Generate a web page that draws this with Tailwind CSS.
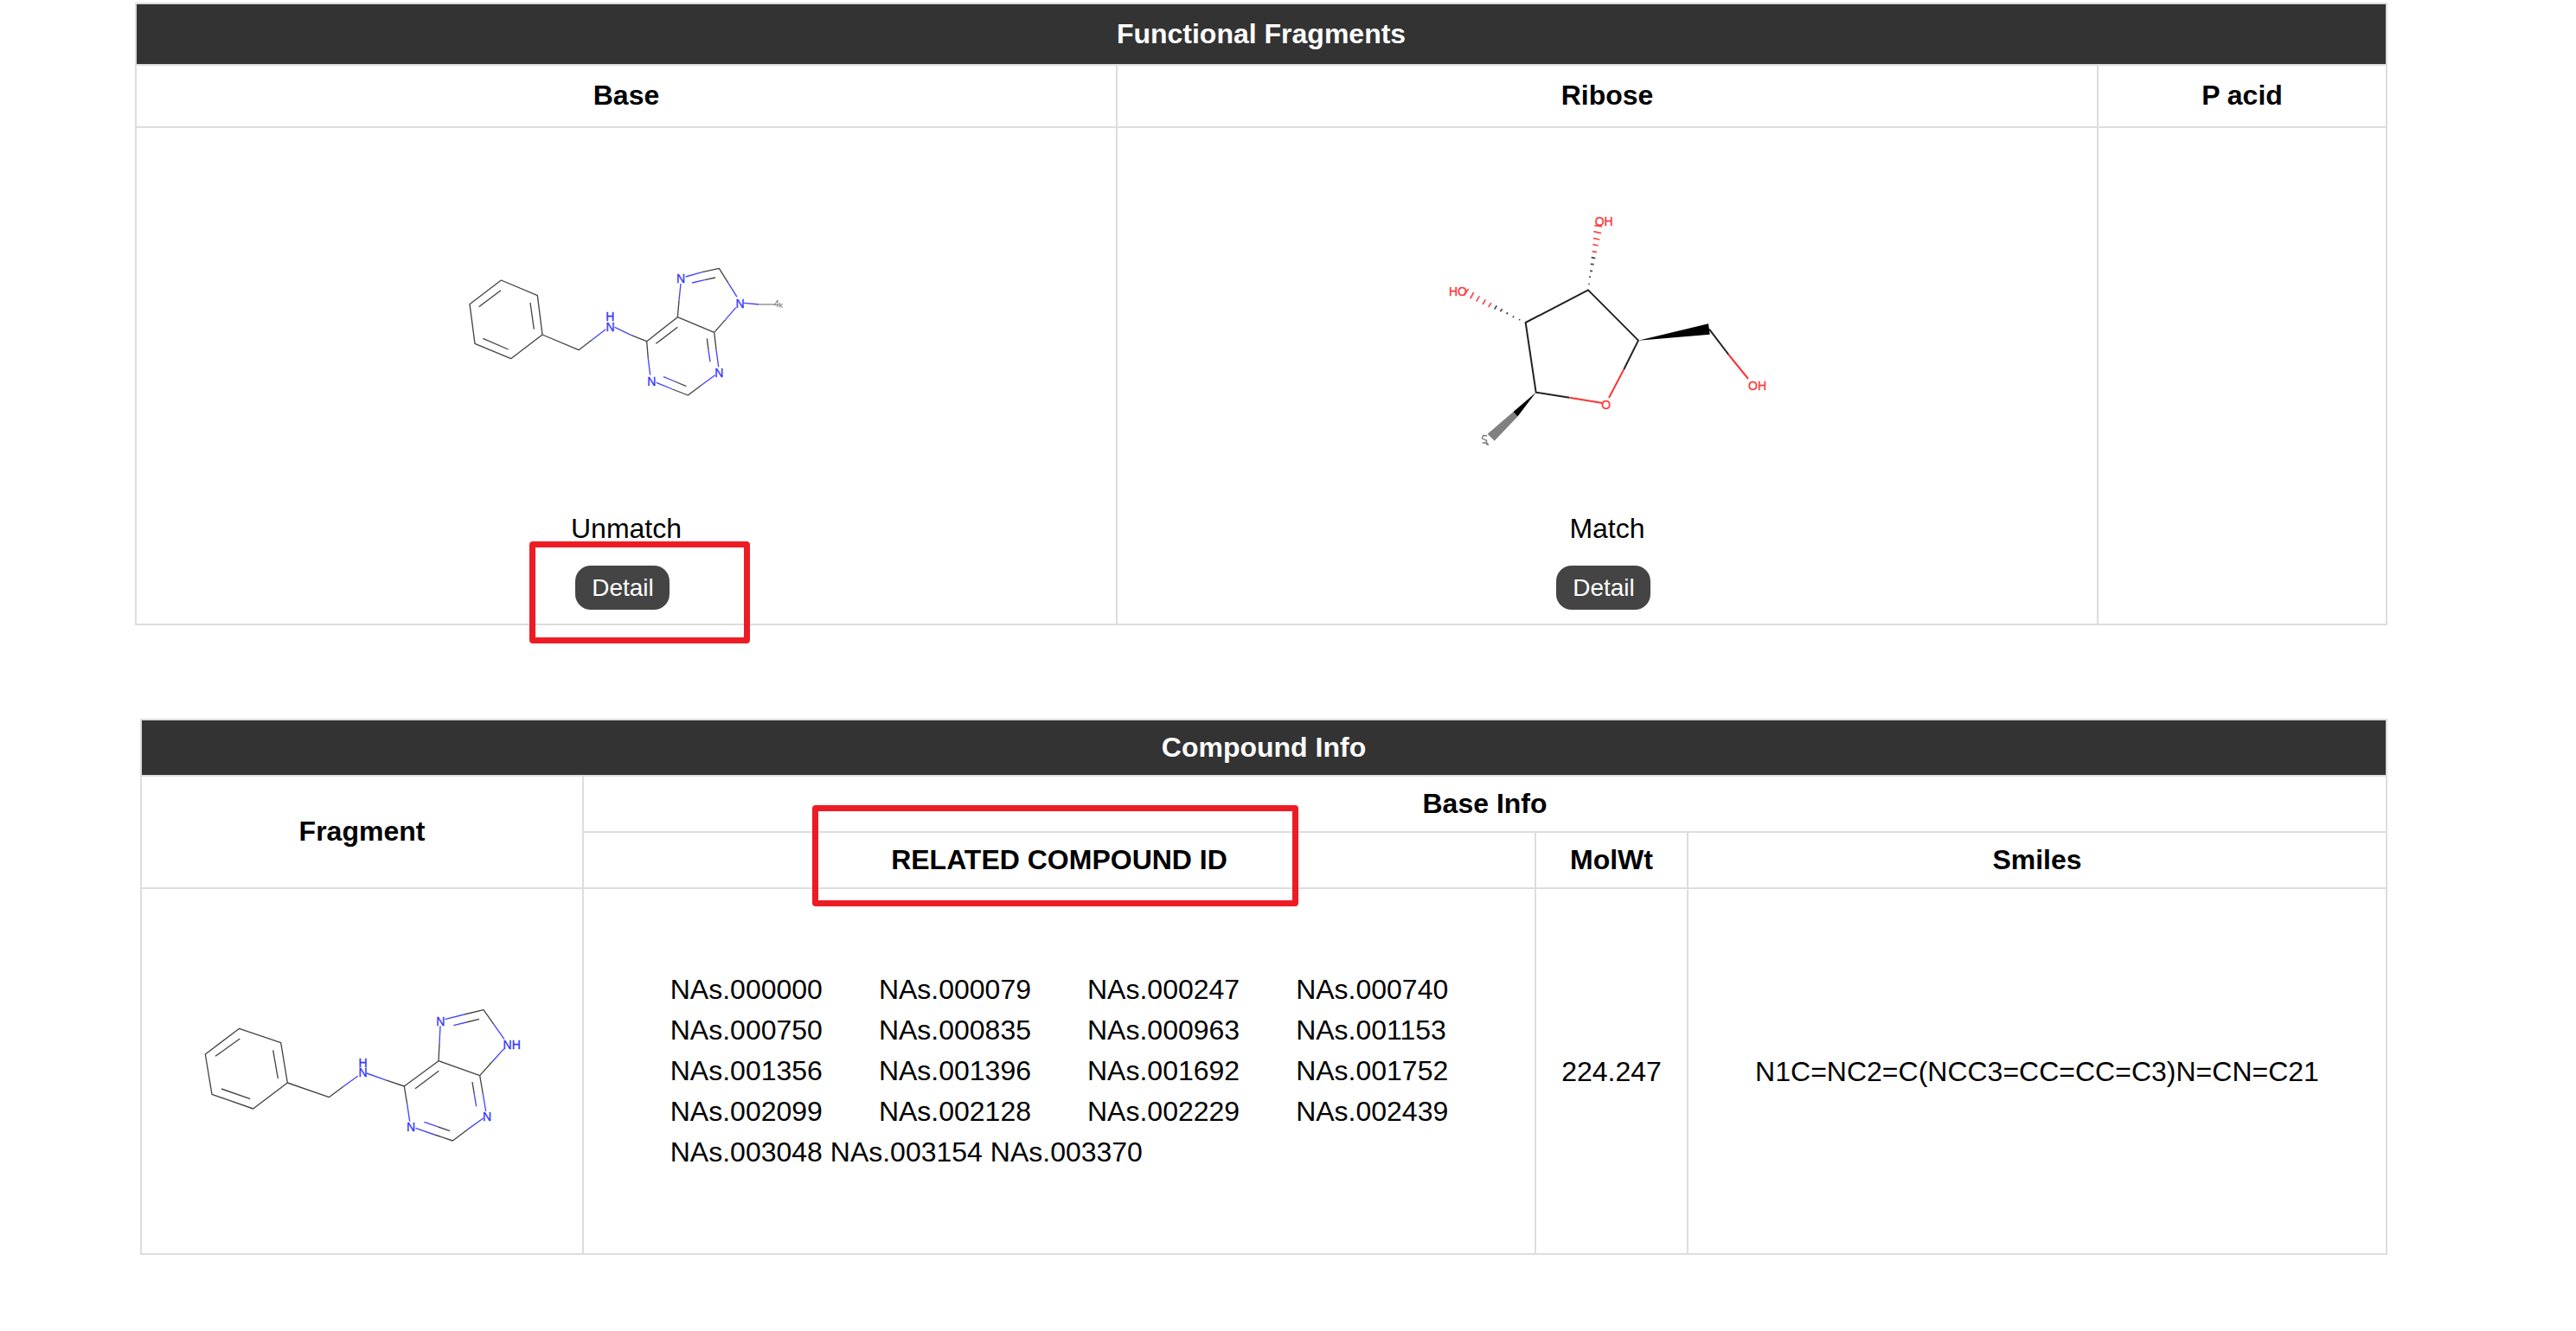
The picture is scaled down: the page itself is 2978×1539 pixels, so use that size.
<!DOCTYPE html>
<html lang="en">
<head>
    <meta charset="UTF-8">
    <meta name="viewport" content="width=device-width, initial-scale=1.0">
    <title>Functional Fragments</title>
    <script src="https://cdn.jsdelivr.net/npm/@tailwindcss/browser@4"></script>
</head>
<body class="bg-white font-['Liberation_Sans',Arial,sans-serif] text-[32px] leading-[48px] text-black">
    <main class="pt-[3px] pr-[218px] pb-20 pl-[156px]">

        <!-- Functional fragments -->
        <table class="w-full table-fixed border-collapse text-center">
            <colgroup>
                <col>
                <col>
                <col class="w-[334px]">
            </colgroup>
            <thead>
                <tr class="h-[71px] bg-[#333333] text-white">
                    <th colspan="3" class="border-2 border-[#dddddd] pb-0.5">Functional Fragments</th>
                </tr>
                <tr class="h-[72px]">
                    <th class="border-2 border-[#dddddd] pb-0.5">Base</th>
                    <th class="border-2 border-[#dddddd] pb-0.5">Ribose</th>
                    <th class="border-2 border-[#dddddd] pb-0.5">P acid</th>
                </tr>
            </thead>
            <tbody>
                <tr>
                    <td class="border-2 border-[#dddddd] pb-4">
                        <svg class="mx-auto block h-[439px] w-[450px]" viewBox="-63 -426 1350 1317" fill="none" stroke-width="4" stroke-linejoin="round" role="img" aria-label="Base structure">
                            <g stroke="#444444">
                                <path d="M178 102 L304 155 L321 291 L212 374 L87 322 L69 185 Z"/>
                                <path d="M177 137 L101 194 M279 180 L292 272 M115 304 L203 342"/>
                                <path d="M321 291 L447 344 L494 308 M628 292 L683 314 L790 230 L917 283 M683 314 L688 374"/>
                                <path d="M715 322 L790 265 M790 230 L795 172 M875 74 L934 61 L966 112 M884 101 L921 93"/>
                                <path d="M917 283 L956 239 M917 283 L924 343 M892 304 L897 344"/>
                                <path d="M772 480 L826 501 L873 466 M780 453 L820 470"/>
                            </g>
                            <g stroke="#4444ff">
                                <path d="M494 308 L541 272 M572 265 L628 292 M688 374 L695 431"/>
                                <path d="M795 172 L801 114 M818 90 L875 74 M840 111 L884 101 M966 112 L996 160"/>
                                <path d="M956 239 L992 197 M924 343 L932 402 M897 344 L903 385"/>
                                <path d="M716 457 L772 480 M741 437 L780 453 M873 466 L920 431 M1020 181 L1072 186"/>
                            </g>
                            <path d="M1072 186 L1128 186" stroke="#888888"/>
                            <path d="M1126 188 L1137 171 L1137 196 M1126 188 H1142 M1145 180 V196 M1155 184 L1146 190 L1155 197" stroke="#777777" stroke-width="3"/>
                            <g class="fill-[#3333ff] stroke-[#3333ff] stroke-1" font-size="42" text-anchor="middle">
                                <text x="556" y="243">H</text>
                                <text x="557" y="280">N</text>
                                <text x="801" y="112">N</text>
                                <text x="1007" y="198">N</text>
                                <text x="934" y="437">N</text>
                                <text x="700" y="468">N</text>
                            </g>
                        </svg>
                        <p>Unmatch</p>
                        <div class="relative mt-[19px] mr-2 inline-block align-top">
                            <button type="button" class="block h-[51px] w-[109px] rounded-[18px] bg-[#444444] text-[28px] text-white">Detail</button>
                            <div class="pointer-events-none absolute -top-7 -left-[53px] h-[118px] w-[255px] rounded-[4px] border-[7px] border-[#ed1c24]"></div>
                        </div>
                    </td>
                    <td class="border-2 border-[#dddddd] pb-4">
                        <svg class="mx-auto block h-[439px] w-[450px]" viewBox="-51 -246 1350 1317" fill="none" stroke-width="6" stroke-linejoin="round" role="img" aria-label="Ribose structure">
                            <g stroke="#222222">
                                <path d="M493 689 L377 671 L341 429 L558 316 L732 491 L682 591"/>
                                <path d="M978 452 L1045 540"/>
                            </g>
                            <g stroke="#ff3333">
                                <path d="M493 689 L607 708 M682 591 L630 690 M1045 540 L1113 624"/>
                            </g>
                            <polygon points="732,491 975,433 980,470" fill="#000000"/>
                            <polygon points="377,671 298,739 313,755" fill="#000000"/>
                            <polygon points="298,739 313,755 233,839 209,815" fill="#808080"/>
                            <!-- hashed bonds -->
                            <g stroke="#444444" stroke-width="5">
                                <path d="M559 295 L563 296 M561 270 L567 271 M564 249 L573 251 M566 226 L578 227 M569 203 L583 206"/>
                                <path d="M319 421 L321 417 M297 411 L300 406 M275 400 L279 394 M253 391 L260 382 M233 383 L241 370"/>
                            </g>
                            <g stroke="#ff4444" stroke-width="5">
                                <path d="M572 182 L588 185 M574 158 L593 162 M576 136 L598 141 M577 113 L603 119 M580 92 L607 96"/>
                                <path d="M212 375 L222 361 M192 366 L202 349 M170 356 L181 337 M149 346 L161 324 M127 334 L143 312"/>
                            </g>
                            <path d="M207 822 L194 820 L190 831 L206 838 L204 846 L191 846 M203 851 L213 851 M207 845 L211 855" stroke="#777777" stroke-width="4"/>
                            <g class="fill-[#ff3333] stroke-[#ff3333] stroke-1" font-size="42">
                                <text x="581" y="93">OH</text>
                                <text x="75" y="336">HO</text>
                                <text x="1113" y="664">OH</text>
                                <text x="604" y="730">O</text>
                            </g>
                        </svg>
                        <p>Match</p>
                        <div class="mt-[19px] mr-2 inline-block align-top">
                            <button type="button" class="block h-[51px] w-[109px] rounded-[18px] bg-[#444444] text-[28px] text-white">Detail</button>
                        </div>
                    </td>
                    <td class="border-2 border-[#dddddd]"></td>
                </tr>
            </tbody>
        </table>

        <!-- Compound info -->
        <div class="mt-[108px] pl-[6px]">
            <table class="w-full table-fixed border-collapse text-center">
                <colgroup>
                    <col class="w-[511px]">
                    <col>
                    <col class="w-[176px]">
                    <col class="w-[808px]">
                </colgroup>
                <thead>
                    <tr class="h-[65px] bg-[#333333] text-white">
                        <th colspan="4" class="border-2 border-[#dddddd] pb-0.5">Compound Info</th>
                    </tr>
                    <tr class="h-[65px]">
                        <th rowspan="2" class="border-2 border-[#dddddd] pb-0.5">Fragment</th>
                        <th colspan="3" class="border-2 border-[#dddddd] pb-0.5">Base Info</th>
                    </tr>
                    <tr class="h-[65px]">
                        <th class="border-2 border-[#dddddd] pb-0.5">
                            <span class="relative inline-block align-top">
                                RELATED COMPOUND ID
                                <span class="pointer-events-none absolute -top-[39px] -right-[82px] -bottom-[30px] -left-[91px] rounded-[4px] border-[7px] border-[#ed1c24]"></span>
                            </span>
                        </th>
                        <th class="border-2 border-[#dddddd] pb-0.5">MolWt</th>
                        <th class="border-2 border-[#dddddd] pb-0.5">Smiles</th>
                    </tr>
                </thead>
                <tbody>
                    <tr class="h-[423px]">
                        <td class="border-2 border-[#dddddd]">
                            <svg class="mx-auto block h-[400px] w-[400px]" viewBox="-4 -333 1200 1200" fill="none" stroke-width="4" stroke-linejoin="round" role="img" aria-label="Fragment structure">
                                <g stroke="#444444">
                                    <path d="M169 118 L313 167 L336 306 L217 396 L74 346 L51 207 Z"/>
                                    <path d="M171 153 L86 214 M286 193 L303 291 M107 327 L207 362"/>
                                    <path d="M336 306 L480 356 L530 319 M675 296 L741 318 L860 230 L1003 281 M741 318 L751 380"/>
                                    <path d="M779 326 L861 265 M860 230 L863 169 M949 69 L1016 53 L1052 104 M957 96 L1001 85"/>
                                    <path d="M1003 281 L1045 234 M1003 281 L1014 345 M977 303 L984 346"/>
                                    <path d="M846 486 L909 507 L962 467 M856 458 L899 473"/>
                                </g>
                                <g stroke="#4444ff">
                                    <path d="M530 319 L580 283 M611 273 L675 296 M751 380 L760 440"/>
                                    <path d="M863 169 L866 109 M882 86 L949 69 M912 107 L957 96 M1052 104 L1088 155"/>
                                    <path d="M1045 234 L1087 188 M1014 345 L1024 405 M984 346 L991 388"/>
                                    <path d="M780 463 L846 486 M810 442 L856 458 M962 467 L1015 429"/>
                                </g>
                                <g class="fill-[#3333ff] stroke-[#3333ff] stroke-1" font-size="42" text-anchor="middle">
                                    <text x="598" y="253">H</text>
                                    <text x="598" y="286">N</text>
                                    <text x="867" y="108">N</text>
                                    <text x="1114" y="190">NH</text>
                                    <text x="1028" y="437">N</text>
                                    <text x="764" y="475">N</text>
                                </g>
                            </svg>
                        </td>
                        <td class="border-2 border-[#dddddd]">
                            <div class="mx-auto grid w-fit grid-cols-[repeat(4,auto)] gap-x-[65px] text-left leading-[47px]">
                                <span>NAs.000000</span>
                                <span>NAs.000079</span>
                                <span>NAs.000247</span>
                                <span>NAs.000740</span>
                                <span>NAs.000750</span>
                                <span>NAs.000835</span>
                                <span>NAs.000963</span>
                                <span>NAs.001153</span>
                                <span>NAs.001356</span>
                                <span>NAs.001396</span>
                                <span>NAs.001692</span>
                                <span>NAs.001752</span>
                                <span>NAs.002099</span>
                                <span>NAs.002128</span>
                                <span>NAs.002229</span>
                                <span>NAs.002439</span>
                                <span class="col-span-4">NAs.003048 NAs.003154 NAs.003370</span>
                            </div>
                        </td>
                        <td class="border-2 border-[#dddddd]">224.247</td>
                        <td class="border-2 border-[#dddddd]">N1C=NC2=C(NCC3=CC=CC=C3)N=CN=C21</td>
                    </tr>
                </tbody>
            </table>
        </div>

    </main>
</body>
</html>
